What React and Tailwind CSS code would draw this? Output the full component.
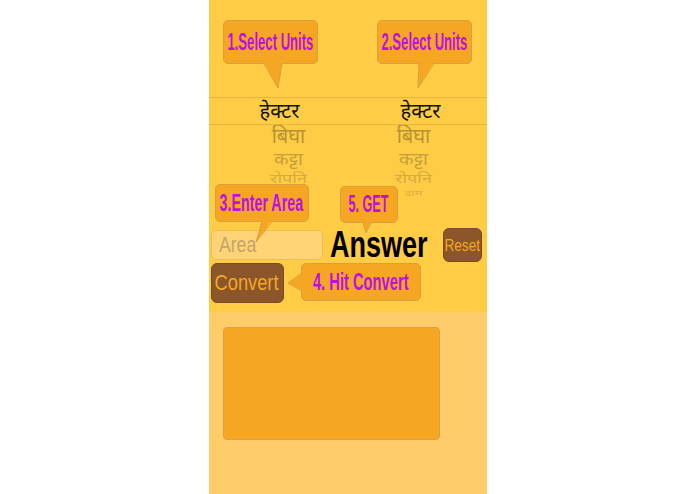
import React from "react";

function Bubble({ left, top, w, h, fill, stroke, text, sx }) {
  return (
    <div
      className="absolute rounded-[5px] border border-[#D9A13E] bg-[#F5A623] flex items-center justify-center"
      style={{ left, top, width: w, height: h }}
    >
      <svg
        className="absolute left-[-1px] top-[-1px] overflow-visible"
        width={w}
        height={h}
      >
        <polygon points={fill} fill="#F5A623" />
        <polyline points={stroke} fill="none" stroke="#D9A13E" strokeWidth="1" />
      </svg>
      <span
        className="relative inline-block whitespace-nowrap font-['Liberation_Sans',Arial,sans-serif] font-bold text-[23px] leading-none text-[#BD10E0]"
        style={{ transform: `scaleX(${sx})` }}
      >
        {text}
      </span>
    </div>
  );
}

const deva = "font-['Noto_Sans_Devanagari','Lohit_Devanagari','Noto_Sans',sans-serif]";
const sans = "font-['Liberation_Sans',Arial,sans-serif]";

export default function App() {
  return (
    <div className="w-[695px] h-[494px] bg-white flex justify-center overflow-hidden">
      <div className="w-[278px] h-[494px] flex flex-col">
        {/* top section */}
        <div className="relative h-[312px] bg-[#FFCC45]">
          <div className="pt-[97px]">
            {/* selection band */}
            <div className={"h-[28px] border-y border-[#E5B63E] grid grid-cols-2 " + deva}>
              <div className="flex items-center justify-center pl-[3px] text-[20px] text-[#111]">हेक्टर</div>
              <div className="flex items-center justify-center pl-[7px] text-[20px] text-[#111]">हेक्टर</div>
            </div>
            {/* wheel items */}
            <div className={"h-[103px] grid grid-cols-2 overflow-hidden " + deva}>
              <div className="flex flex-col items-center pl-[21px] pt-[1px]">
                <div className="h-[24px] leading-[24px] text-[20px] text-[#B89334]">बिघा</div>
                <div className="h-[22px] leading-[22px] text-[19px] text-[#C6A03A] scale-y-[0.9]">कट्टा</div>
                <div className="h-[15px] leading-[15px] text-[18px] text-[#D6AC3E] scale-y-[0.72]">रोपनि</div>
                <div className="h-[14px] leading-[14px] text-[13px] text-[#E6B840] scale-y-[0.6]">दाम</div>
              </div>
              <div className="flex flex-col items-center pr-[7px] pt-[1px]">
                <div className="h-[24px] leading-[24px] text-[20px] text-[#B89334]">बिघा</div>
                <div className="h-[22px] leading-[22px] text-[19px] text-[#C6A03A] scale-y-[0.9]">कट्टा</div>
                <div className="h-[15px] leading-[15px] text-[18px] text-[#D6AC3E] scale-y-[0.72]">रोपनि</div>
                <div className="h-[14px] leading-[14px] text-[13px] text-[#DDB03E] scale-y-[0.6]">दाम</div>
              </div>
            </div>
            {/* row 1 */}
            <div className="h-[34px] flex items-center">
              <div className="shrink-0 ml-[2px] w-[112px] h-[30px] rounded-[5px] border border-[#EBBE5A] bg-[#FFD477] flex items-center pl-[7px]">
                <span className={"inline-block origin-left scale-x-[0.8] text-[22px] leading-none text-[#C4A46A] " + sans}>Area</span>
              </div>
              <div className="shrink-0 ml-[7px] w-[100px] whitespace-nowrap">
                <span className={"inline-block origin-left scale-x-[0.75] font-bold text-[36px] leading-none text-black " + sans}>Answer</span>
              </div>
              <div className="shrink-0 ml-auto mr-[5px] w-[39px] h-[34px] rounded-[6px] bg-[#8B572A] border border-[#7A4A22] flex items-center justify-center">
                <span className={"inline-block scale-x-[0.8] text-[17px] leading-none text-[#F5A623] " + sans}>Reset</span>
              </div>
            </div>
            {/* row 2 */}
            <div className="mt-[1px] flex">
              <div className="ml-[2px] w-[73px] h-[40px] rounded-[6px] bg-[#8B572A] border border-[#7A4A22] flex items-center justify-center">
                <span className={"inline-block scale-x-[0.83] text-[22px] leading-none text-[#F5A623] " + sans}>Convert</span>
              </div>
            </div>
          </div>

          <Bubble left={14} top={20} w={95} h={44} sx={0.57}
            fill="41,42 59,42 55,68" stroke="41,44 55,68 59,44" text="1.Select Units" />
          <Bubble left={168} top={20} w={95} h={44} sx={0.57}
            fill="42,42 57,42 41,68" stroke="42,44 41,68 57,44" text="2.Select Units" />
          <Bubble left={6} top={184} w={94} h={38} sx={0.62}
            fill="47,36 57,36 41,58" stroke="47,38 41,58 57,38" text="3.Enter Area" />
          <Bubble left={131} top={186} w={58} h={37} sx={0.55}
            fill="23,35 31,35 26,47" stroke="23,37 26,47 31,37" text="5. GET" />
          <Bubble left={92} top={263} w={120} h={38} sx={0.64}
            fill="2,10 -13,20 2,28" stroke="1,10 -13,20 1,28" text="4. Hit Convert" />
        </div>

        {/* bottom section */}
        <div className="flex-1 bg-[#FFCC6A] pt-[15px] pl-[14px]">
          <div className="w-[217px] h-[113px] rounded-[4px] border border-[#DDA04A] bg-[#F5A623]" />
        </div>
      </div>
    </div>
  );
}
